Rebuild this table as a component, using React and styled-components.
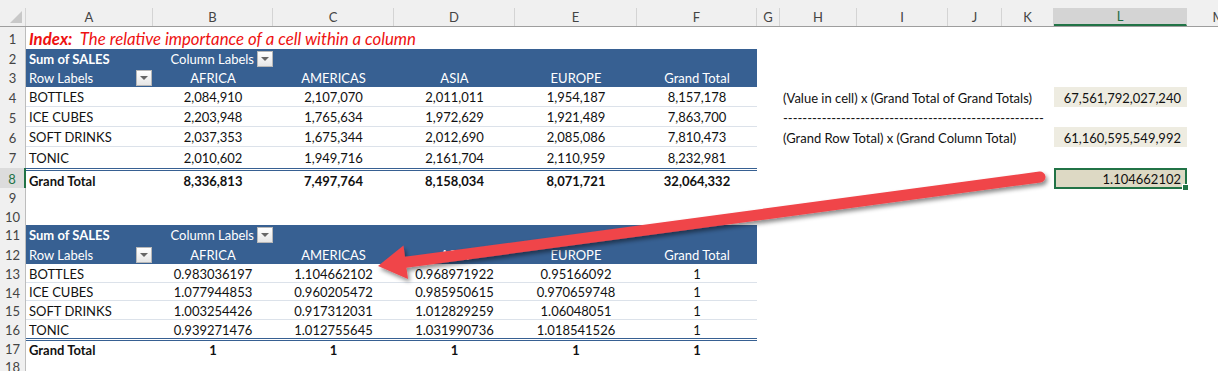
import React from "react";
import styled, { createGlobalStyle } from "styled-components";

const GlobalStyle = createGlobalStyle`
  html, body { margin: 0; padding: 0; background: #fff; }
  body { font-family: Lato, "Liberation Sans", sans-serif; }
`;

const COLS = "26px 127px 120px 121px 121px 122px 120px 23px 77px 91px 54px 52px 133px 64px";
const LETTERS = ["A", "B", "C", "D", "E", "F", "G", "H", "I", "J", "K", "L", "M"];
const BLUE = "#376092";

const Sheet = styled.div`
  position: relative;
  width: 1218px;
  height: 371px;
  overflow: hidden;
  background: #fff;
  font-size: 13px;
  color: #111;
`;

const TopStrip = styled.div`
  height: 8px;
  background: #f0f0f0;
`;

const Row = styled.div`
  display: grid;
  grid-template-columns: ${COLS};
  height: ${(p) => p.$h}px;
`;

const HeadRow = styled(Row)`
  background: #f0f0f0;
  border-bottom: 1px solid #9e9e9e;
  box-sizing: border-box;
`;

const Corner = styled.div`
  position: relative;
  border-right: 1px solid #d4d4d4;
  &::after {
    content: "";
    position: absolute;
    right: 3px;
    bottom: 3px;
    border-style: solid;
    border-width: 0 0 12px 12px;
    border-color: transparent transparent #c8c8c8 transparent;
  }
`;

const ColLetter = styled.div`
  display: flex;
  align-items: center;
  justify-content: center;
  color: ${(p) => (p.$sel ? "#1e6b41" : "#444")};
  background: ${(p) => (p.$sel ? "#d4d4d4" : "transparent")};
  border-right: 1px solid #d4d4d4;
  border-bottom: ${(p) => (p.$sel ? "2px solid #217346" : "none")};
  box-sizing: border-box;
  font-size: 13px;
`;

const RowNum = styled.div`
  display: flex;
  align-items: center;
  justify-content: center;
  background: ${(p) => (p.$sel ? "#dcdcdc" : "#f0f0f0")};
  color: ${(p) => (p.$sel ? "#217346" : "#444")};
  border-right: ${(p) => (p.$sel ? "2px solid #217346" : "1px solid #bdbdbd")};
  box-sizing: border-box;
  font-size: 13px;
  padding-top: 1px;
`;

const Cell = styled.div`
  display: flex;
  align-items: center;
  justify-content: ${(p) => p.$align || "flex-start"};
  padding: 1px 3px 0;
  box-sizing: border-box;
  white-space: nowrap;
  overflow: visible;
  min-width: 0;
  font-weight: ${(p) => (p.$bold ? 700 : 400)};
  background: ${(p) => p.$bg || "transparent"};
  color: ${(p) => p.$color || "inherit"};
  border-bottom: ${(p) => p.$line || "none"};
  border-top: ${(p) => p.$top || "none"};
`;

const Title = styled.span`
  color: #ee1111;
  font-style: italic;
  font-size: 16.8px;
  b {
    font-weight: 700;
  }
`;

const DropButton = styled.span`
  display: inline-flex;
  align-items: center;
  justify-content: center;
  width: 16px;
  height: 16px;
  margin-left: ${(p) => p.$ml || 0}px;
  box-sizing: border-box;
  border: 1px solid #b8b8b8;
  background: linear-gradient(#ffffff, #e6e6e6);
  &::after {
    content: "";
    border-style: solid;
    border-width: 4px 4px 0 4px;
    border-color: #666 transparent transparent transparent;
  }
`;

const Selected = styled(Cell)`
  position: relative;
  border: 2px solid #217346;
  background: #ddd9c4;
  padding-right: 4px;
  &::after {
    content: "";
    position: absolute;
    right: -4px;
    bottom: -4px;
    width: 5px;
    height: 5px;
    background: #217346;
    border: 1px solid #fff;
  }
`;

const Arrow = styled.svg`
  position: absolute;
  left: 0;
  top: 0;
  pointer-events: none;
`;

const top = [
  ["BOTTLES", "2,084,910", "2,107,070", "2,011,011", "1,954,187", "8,157,178"],
  ["ICE CUBES", "2,203,948", "1,765,634", "1,972,629", "1,921,489", "7,863,700"],
  ["SOFT DRINKS", "2,037,353", "1,675,344", "2,012,690", "2,085,086", "7,810,473"],
  ["TONIC", "2,010,602", "1,949,716", "2,161,704", "2,110,959", "8,232,981"],
];
const topTotal = ["Grand Total", "8,336,813", "7,497,764", "8,158,034", "8,071,721", "32,064,332"];

const bottom = [
  ["BOTTLES", "0.983036197", "1.104662102", "0.968971922", "0.95166092", "1"],
  ["ICE CUBES", "1.077944853", "0.960205472", "0.985950615", "0.970659748", "1"],
  ["SOFT DRINKS", "1.003254426", "0.917312031", "1.012829259", "1.06048051", "1"],
  ["TONIC", "0.939271476", "1.012755645", "1.031990736", "1.018541526", "1"],
];
const bottomTotal = ["Grand Total", "1", "1", "1", "1", "1"];

const heights = [22, 19, 19, 20, 20, 20, 21, 20, 19, 18, 19, 20, 19, 18, 19, 18, 19, 19];

const LINE = "1px solid #dce2ea";
const DOUBLE = `3px double ${BLUE}`;

const Blank = ({ n }) => Array.from({ length: n }, (_, i) => <Cell key={"b" + i} />);

const PivotHeader = ({ n }) => (
  <>
    <Row $h={heights[n - 1]}>
      <RowNum>{n}</RowNum>
      <Cell $bg={BLUE} $color="#fff" $bold>Sum of SALES</Cell>
      <Cell $bg={BLUE} $color="#fff" $align="flex-end" style={{ paddingRight: 0 }}>
        Column Labels <DropButton $ml={3} />
      </Cell>
      {[0, 1, 2, 3].map((i) => (
        <Cell key={i} $bg={BLUE} />
      ))}
    </Row>
    <Row $h={heights[n]}>
      <RowNum>{n + 1}</RowNum>
      <Cell $bg={BLUE} $color="#fff" $align="space-between" style={{ paddingRight: 1 }}>
        Row Labels <DropButton />
      </Cell>
      {["AFRICA", "AMERICAS", "ASIA", "EUROPE", "Grand Total"].map((h) => (
        <Cell key={h} $bg={BLUE} $color="#fff" $align="center">
          {h}
        </Cell>
      ))}
    </Row>
  </>
);

const DataRow = ({ n, data, line, total, right }) => (
  <Row $h={heights[n - 1]}>
    <RowNum $sel={n === 8}>{n}</RowNum>
    {data.map((v, i) => (
      <Cell
        key={i}
        $align={i === 0 ? "flex-start" : "center"}
        $bold={total}
        $line={line}
        $top={total ? DOUBLE : "none"}
      >
        {v}
      </Cell>
    ))}
    {right}
  </Row>
);

const SideRow = ({ label, value }) => (
  <>
    <Cell />
    <Cell style={{ paddingLeft: 3 }}>{label}</Cell>
    <Cell />
    <Cell />
    <Cell />
    {value ? <Cell $bg="#eeece1" $align="flex-end" style={{ paddingRight: 6 }}>{value}</Cell> : <Cell />}
  </>
);

export default function App() {
  const tailX = 1040, tailY = 177, tipX = 378, tipY = 266;
  const dx = tipX - tailX, dy = tipY - tailY;
  const len = Math.hypot(dx, dy);
  const ux = dx / len, uy = dy / len;
  const nx = -uy, ny = ux;
  const L = 28, W = 17;
  const bx = tipX - ux * L, by = tipY - uy * L;
  const head = `${tipX},${tipY} ${bx + nx * W},${by + ny * W} ${bx - nx * W},${by - ny * W}`;

  return (
    <>
      <GlobalStyle />
      <Sheet>
        <TopStrip />
        <HeadRow $h={19}>
          <Corner />
          {LETTERS.map((l) => (
            <ColLetter key={l} $sel={l === "L"}>
              {l}
            </ColLetter>
          ))}
        </HeadRow>
        <Row $h={heights[0]}>
          <RowNum>1</RowNum>
          <Cell>
            <Title>
              <b>Index:</b>&nbsp; The relative importance of a cell within a column
            </Title>
          </Cell>
        </Row>
        <PivotHeader n={2} />
        {top.map((r, i) => (
          <DataRow
            key={i}
            n={4 + i}
            data={r}
            line={i === 3 ? "none" : LINE}
            right={
              i === 0 ? (
                <SideRow label="(Value in cell) x (Grand Total of Grand Totals)" value="67,561,792,027,240" />
              ) : i === 1 ? (
                <SideRow label="------------------------------------------------------" />
              ) : i === 2 ? (
                <SideRow label="(Grand Row Total) x (Grand Column Total)" value="61,160,595,549,992" />
              ) : null
            }
          />
        ))}
        <DataRow
          n={8}
          data={topTotal}
          total
          right={
            <>
              <Blank n={5} />
              <Selected $align="flex-end">1.104662102</Selected>
            </>
          }
        />
        <Row $h={heights[8]}>
          <RowNum>9</RowNum>
        </Row>
        <Row $h={heights[9]}>
          <RowNum>10</RowNum>
        </Row>
        <PivotHeader n={11} />
        {bottom.map((r, i) => (
          <DataRow key={i} n={13 + i} data={r} line={i === 3 ? "none" : LINE} />
        ))}
        <DataRow n={17} data={bottomTotal} total />
        <Row $h={heights[17]}>
          <RowNum>18</RowNum>
        </Row>

        <Arrow width="1218" height="371">
          <defs>
            <filter id="shadow" x="-10%" y="-50%" width="120%" height="200%">
              <feDropShadow dx="2" dy="3" stdDeviation="2" floodColor="#000" floodOpacity="0.45" />
            </filter>
          </defs>
          <g filter="url(#shadow)">
            <line x1={tailX} y1={tailY} x2={bx + ux * 2} y2={by + uy * 2} stroke="#f0454a" strokeWidth="11" strokeLinecap="round" />
            <polygon points={head} fill="#f0454a" />
          </g>
        </Arrow>
      </Sheet>
    </>
  );
}
